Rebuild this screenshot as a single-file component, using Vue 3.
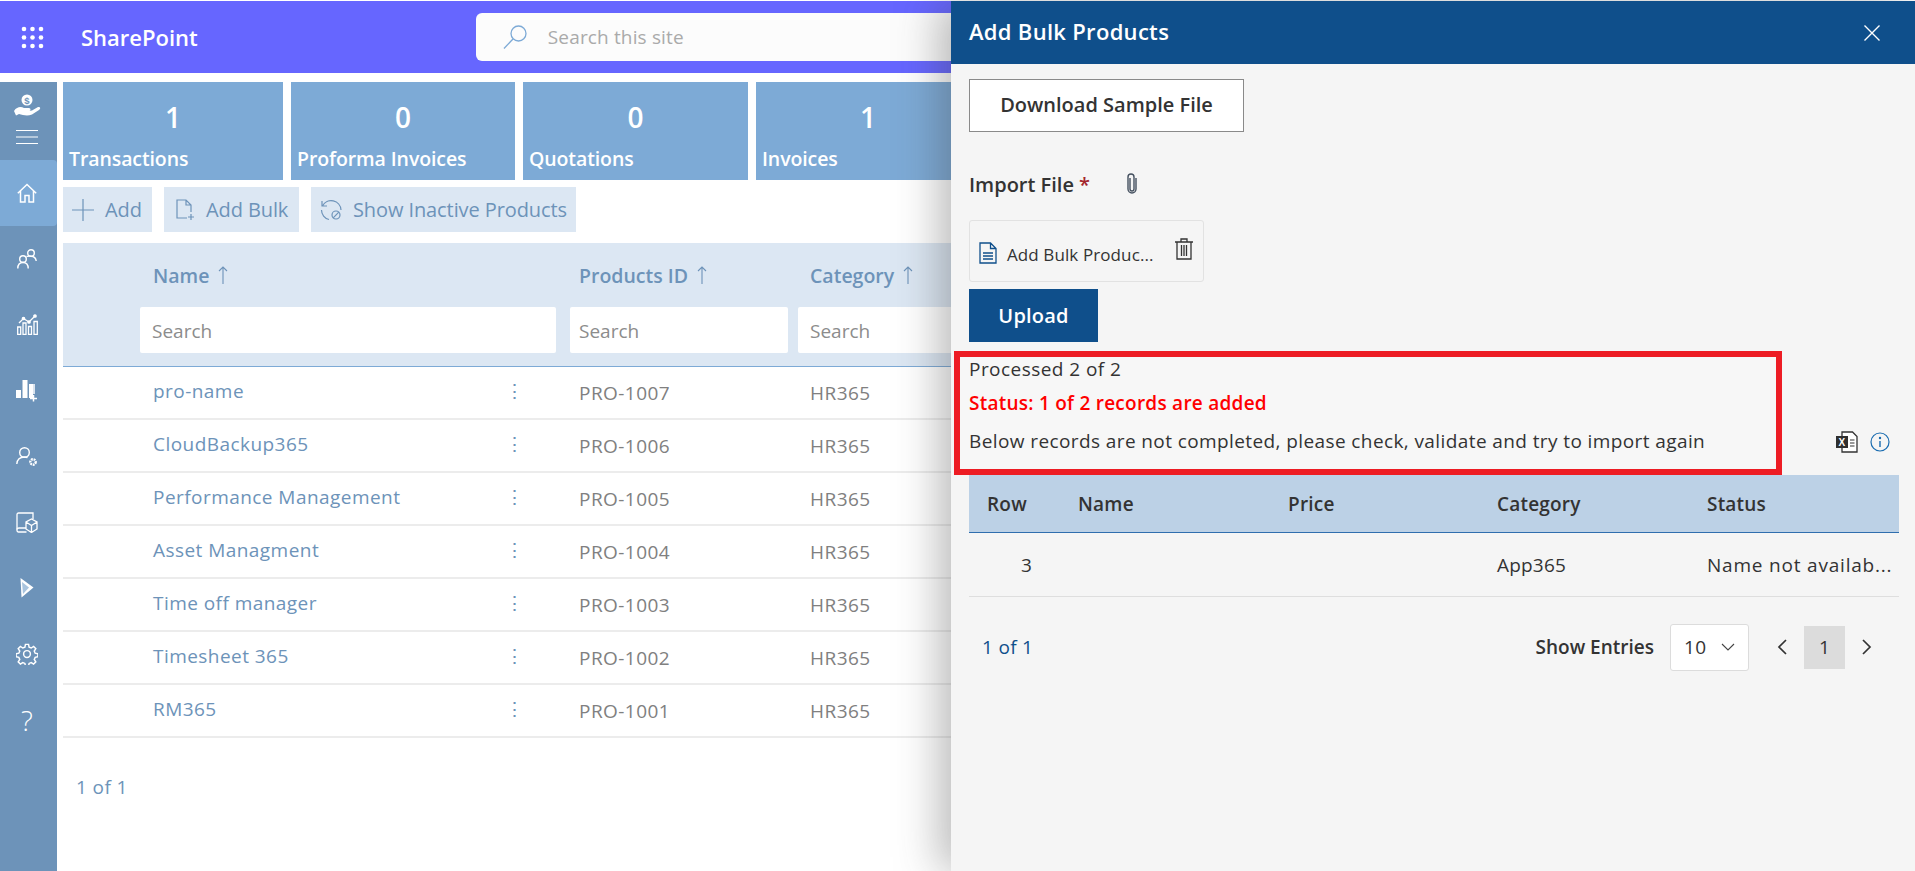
<script setup>
const tiles = [
  { n: '1', label: 'Transactions' },
  { n: '0', label: 'Proforma Invoices' },
  { n: '0', label: 'Quotations' },
  { n: '1', label: 'Invoices' },
]
const rows = [
  ['pro-name', 'PRO-1007'],
  ['CloudBackup365', 'PRO-1006'],
  ['Performance Management', 'PRO-1005'],
  ['Asset Managment', 'PRO-1004'],
  ['Time off manager', 'PRO-1003'],
  ['Timesheet 365', 'PRO-1002'],
  ['RM365', 'PRO-1001'],
]
const cols = [
  { label: 'Name', cls: 'cell-name' },
  { label: 'Products ID', cls: 'cell-id' },
  { label: 'Category', cls: 'cell-cat' },
]
</script>

<template>
  <div class="page">
    <header class="topbar">
      <svg class="waffle" width="23" height="23" viewBox="0 0 23 23" fill="#fff">
        <circle cx="3" cy="3" r="2.300" /><circle cx="11.500" cy="3" r="2.300" /><circle cx="20" cy="3" r="2.300" />
        <circle cx="3" cy="11.500" r="2.300" /><circle cx="11.500" cy="11.500" r="2.300" /><circle cx="20" cy="11.500" r="2.300" />
        <circle cx="3" cy="20" r="2.300" /><circle cx="11.500" cy="20" r="2.300" /><circle cx="20" cy="20" r="2.300" />
      </svg>
      <span class="brand">SharePoint</span>
      <div class="sitesearch">
        <svg width="24" height="24" viewBox="0 0 24 24" fill="none" stroke="#7daad6" stroke-width="1.300">
          <circle cx="15.500" cy="8.500" r="7.500" /><path d="M10 14 L1 23.500" />
        </svg>
        <span>Search this site</span>
      </div>
    </header>

    <div class="body">
      <aside class="side">
        <div class="side-top">
          <svg width="28" height="24" viewBox="0 0 28 24">
            <circle cx="14" cy="6" r="5.500" fill="#fff" />
            <text x="14" y="9.500" font-size="9.500" font-weight="700" text-anchor="middle" fill="#6d93b9" font-family="Liberation Sans">$</text>
            <path d="M1 17 C4 12.500 8 12.500 11 14 L16 14 C18 14.500 18 16.500 16 17 L12 17.500 L19 16.500 L25 13 C27.500 12.500 28 14.500 26 16 L19 20.500 C14 22.500 10 21 6 20 L3 21.500 Z" fill="#fff" />
          </svg>
          <svg width="22" height="14" viewBox="0 0 22 14" stroke="#fff" stroke-width="1"><path d="M0 .5h22M0 7h22M0 13.500h22" /></svg>
        </div>
        <div class="side-item active">
          <svg width="20" height="20" viewBox="0 0 20 20" fill="none" stroke="#fff" stroke-width="1.500"><path d="M.8 10.200 10 1.500l9.200 8.700M3.500 8v11h4.500v-6.500h4V19h4.500V8" /></svg>
        </div>
        <div class="side-item">
          <svg width="20" height="20" viewBox="0 0 20 20" fill="none" stroke="#fff" stroke-width="1.400"><circle cx="14" cy="4" r="3.300" /><circle cx="6" cy="10" r="3.300" /><path d="M.8 19.500c0-3.500 2-6 5.200-6s5.200 2.500 5.200 6M9.500 7.500c1.500-.2 3-.5 4.500-.3 3 .2 5 2.300 5.200 4.800" /></svg>
        </div>
        <div class="side-item">
          <svg width="21" height="21" viewBox="0 0 21 21" fill="none" stroke="#fff" stroke-width="1.300"><path d="M.7 13h3v7.300h-3zM6 9h3v11.300H6zM11.500 12.500h3v7.800h-3zM17 7.500h3.300v12.800H17z" /><path d="M2 9l4.500-4.500L12 8l6-6" /><circle cx="6.500" cy="4.500" r="1.200" fill="#fff" /><circle cx="12" cy="8" r="1.200" fill="#fff" /><circle cx="18" cy="2" r="1.200" fill="#fff" /></svg>
        </div>
        <div class="side-item">
          <svg width="22" height="22" viewBox="0 0 22 22" fill="#fff"><path d="M0 10h5v8H0zM6.500 0h5v18h-5zM13 4h4v14h-4z" /><path d="M18 4v10M14 18.500h7M17.500 15v6.500" stroke="#fff" stroke-width="1.500" /></svg>
        </div>
        <div class="side-item">
          <svg width="22" height="20" viewBox="0 0 22 20" fill="none" stroke="#fff" stroke-width="1.400"><circle cx="8.500" cy="5.500" r="4.800" /><path d="M.8 17c.4-4.500 3.500-7 7.700-7 1 0 2 .2 3 .6" /><circle cx="17" cy="15" r="2.700" stroke-width="2.400" stroke-dasharray="1.800 .8" /></svg>
        </div>
        <div class="side-item">
          <svg width="22" height="21" viewBox="0 0 22 21" fill="none" stroke="#fff" stroke-width="1.300"><path d="M10.500 20H2.500A1.500 1.500 0 0 1 1 18.500V2.500A1.500 1.500 0 0 1 2.500 1H17v6" /><path d="M1 17.500c0-1 .8-1.500 2-1.500h7" /><path d="M15.500 7 21 10v7l-5.500 3.500L10 17v-7zM10 10l5.500 3.500L21 10M15.500 13.500v7" /></svg>
        </div>
        <div class="side-item">
          <svg width="14" height="20" viewBox="0 0 14 20"><path d="M.5 0 13.500 9.500 1.500 19.500z" fill="#fff" /><path d="M2 4 9 9.500 3 16z" fill="#a9c4de" /></svg>
        </div>
        <div class="side-item">
          <svg width="22" height="22" viewBox="0 0 24 24" fill="none" stroke="#fff" stroke-width="1.600"><circle cx="12" cy="12" r="3.700" /><path d="M10.300 1.500h3.400l.6 3 2.300 1 2.600-1.700 2.400 2.400-1.700 2.600 1 2.300 3 .6v3.400l-3 .6-1 2.300 1.700 2.600-2.400 2.400-2.600-1.700-2.300 1-.6 3h-3.400l-.6-3-2.300-1-2.600 1.700-2.400-2.400 1.700-2.600-1-2.300-3-.6v-3.400l3-.6 1-2.300L2.400 6.200l2.400-2.400 2.600 1.700 2.300-1z" /></svg>
        </div>
        <div class="side-item help">?</div>
      </aside>

      <main class="main">
        <section class="tiles">
          <div v-for="t in tiles" :key="t.label" class="tile">
            <div class="tile-n">{{ t.n }}</div>
            <div class="tile-l">{{ t.label }}</div>
          </div>
        </section>

        <section class="toolbar">
          <button class="tool tool-add">
            <svg width="22" height="22" viewBox="0 0 22 22" stroke="#6d93b9" stroke-width="1.200"><path d="M11 0v22M0 11h22" /></svg>
            <span>Add</span>
          </button>
          <button class="tool tool-bulk">
            <svg width="18" height="22" viewBox="0 0 18 22" fill="none" stroke="#6d93b9" stroke-width="1.200"><path d="M11 19H1V1h9l5 5v7M10 1v5h5M15 15v6M12 18h6" /></svg>
            <span>Add Bulk</span>
          </button>
          <button class="tool tool-inactive">
            <svg width="22" height="22" viewBox="0 0 22 22" fill="none" stroke="#6d93b9" stroke-width="1.200"><path d="M2.500 7a9.800 9.800 0 0 1 18.500 4M9 20.500A9.800 9.800 0 0 1 1.500 11M2 2v5h5" /><circle cx="16" cy="16" r="4" /><path d="M13.200 18.800l5.600-5.600" /></svg>
            <span>Show Inactive Products</span>
          </button>
        </section>

        <section class="grid">
          <div class="grid-head">
            <div v-for="c in cols" :key="c.label" :class="c.cls">
              <div class="hlabel">
                <span>{{ c.label }}</span>
                <svg width="10" height="18" viewBox="0 0 10 18" fill="none" stroke="#6d93b9" stroke-width="1.100"><path d="M5 18V1M1 5l4-4 4 4" /></svg>
              </div>
              <div class="hsearch">Search</div>
            </div>
          </div>
          <div v-for="r in rows" :key="r[1]" class="grid-row">
            <div class="row-name"><span class="link">{{ r[0] }}</span><span class="dots">⋮</span></div>
            <div class="row-id">{{ r[1] }}</div>
            <div class="row-cat">HR365</div>
          </div>
          <div class="count">1 of 1</div>
        </section>
      </main>
    </div>

    <aside class="panel">
      <div class="panel-head">
        <span class="panel-title">Add Bulk Products</span>
        <svg width="16" height="16" viewBox="0 0 16 16" stroke="#fff" stroke-width="1.400"><path d="M.5.5l15 15M15.500.5l-15 15" /></svg>
      </div>
      <div class="panel-body">
        <button class="download">Download Sample File</button>
        <div class="import">
          <span class="import-label">Import File <span class="req">*</span></span>
          <svg class="clip" width="12" height="22" viewBox="0 0 12 22" fill="none" stroke="#44505f" stroke-width="1.400"><path d="M4 5v11a2 2 0 0 0 4 0V4a3 3 0 0 0-6 0v12a4 4 0 0 0 8 0V5" /></svg>
        </div>
        <div class="filebox">
          <svg class="fdoc" width="18" height="22" viewBox="0 0 18 22" fill="none" stroke="#0f4f8b" stroke-width="1.300"><path d="M1 1h10.500l5.500 5.500V21H1zM11.500 1v5.500H17M4 11h10M4 14h10M4 17h10" /></svg>
          <span class="fname">Add Bulk Produc...</span>
          <svg class="trash" width="18" height="22" viewBox="0 0 18 22" fill="none" stroke="#333" stroke-width="1.300"><path d="M0 4h18M6 4V1h6v3M2 4v17h14V4M6.500 7v11M9 7v11M11.500 7v11" /></svg>
        </div>
        <button class="upload">Upload</button>

        <div class="status-block">
          <div class="st-1">Processed 2 of 2</div>
          <div class="st-2">Status: 1 of 2 records are added</div>
          <div class="st-3">
            <span>Below records are not completed, please check, validate and try to import again</span>
            <span class="st-icons">
              <svg width="22" height="22" viewBox="0 0 22 22">
                <path d="M6 1h10.500L21 5.500V21H6z" fill="#fff" stroke="#333" stroke-width="1.300" />
                <path d="M14 9h4.500M14 12h4.500M14 15h4.500" stroke="#333" stroke-width="1.200" />
                <rect x="0" y="5" width="12" height="12" fill="#2f2f2f" />
                <text x="6" y="14.800" text-anchor="middle" font-size="10" font-weight="700" fill="#fff" font-family="Liberation Sans">X</text>
              </svg>
              <svg width="20" height="20" viewBox="0 0 20 20" fill="none" stroke="#1a6cb0" stroke-width="1.200"><circle cx="10" cy="10" r="9" /><path d="M10 9v6" stroke-width="1.400" /><circle cx="10" cy="6" r=".6" /></svg>
            </span>
          </div>
        </div>

        <div class="err-table">
          <div class="err-head">
            <span class="c-row">Row</span><span class="c-name">Name</span><span class="c-price">Price</span><span class="c-cat">Category</span><span class="c-stat">Status</span>
          </div>
          <div class="err-row">
            <span class="c-row num">3</span><span class="c-name"></span><span class="c-price"></span><span class="c-cat">App365</span><span class="c-stat">Name not availab...</span>
          </div>
        </div>

        <div class="pager">
          <span class="pcount">1 of 1</span>
          <span class="plabel">Show Entries</span>
          <div class="pselect">
            <span>10</span>
            <svg width="14" height="8" viewBox="0 0 14 8" fill="none" stroke="#444" stroke-width="1.100"><path d="M1 1l6 6 6-6" /></svg>
          </div>
          <svg class="pprev" width="10" height="16" viewBox="0 0 10 16" fill="none" stroke="#333" stroke-width="1.700"><path d="M9 1 2 8l7 7" /></svg>
          <span class="pnum">1</span>
          <svg class="pnext" width="10" height="16" viewBox="0 0 10 16" fill="none" stroke="#333" stroke-width="1.700"><path d="M1 1l7 7-7 7" /></svg>
        </div>
      </div>
    </aside>
  </div>
</template>

<style>
html, body { margin: 0; background: #fff; overflow: hidden; }
</style>

<style scoped>
.page {
  position: relative;
  width: 1915px;
  height: 871px;
  overflow: hidden;
  background: #fff;
  font-family: "Open Sans", "Noto Sans", sans-serif;
  color: #333;
}
button { font-family: inherit; cursor: pointer; }

.topbar {
  margin-top: 1px;
  height: 72px;
  background: #6666ff;
  display: flex;
  align-items: center;
  color: #fff;
}
.waffle { margin-left: 21px; }
.brand { margin-left: 37px; font-size: 22px; font-weight: 600; letter-spacing: 0; }
.sitesearch {
  margin-left: 278px;
  width: 560px;
  height: 48px;
  background: #fcfcfc;
  border-radius: 6px;
  display: flex;
  align-items: center;
  gap: 21px;
  padding-left: 27px;
  color: #aaa;
  font-size: 19px;
  letter-spacing: 0.15px;
}

.body { display: flex; margin-top: 9px; height: 789px; }
.side { width: 57px; background: #6d93b9; display: flex; flex-direction: column; flex-shrink: 0; }
.side-top {
  height: 78px;
  display: flex;
  flex-direction: column;
  align-items: center;
  padding: 12px 3px 0 0;
  gap: 12px;
  box-sizing: border-box;
}
.side-item { height: 65.900px; display: flex; align-items: center; justify-content: center; padding-right: 3px; flex-shrink: 0; }
.side-item.active { background: #7daad6; border-radius: 0 4px 4px 0; }
.help { color: #fff; font-size: 28px; font-weight: 300; }

.main { flex: 1; padding-left: 6px; min-width: 0; }
.tiles { display: flex; gap: 8px; }
.tile {
  width: 224px;
  height: 98px;
  background: #7daad6;
  color: #fff;
  flex-shrink: 0;
  padding: 0 6px;
  box-sizing: border-box;
}
.tile:first-child { width: 220px; }
.tile:nth-child(3) { width: 225px; }
.tile-n { text-align: center; font-size: 28px; font-weight: 600; line-height: 38px; padding-top: 16px; }
.tile-l { font-size: 19.500px; font-weight: 600; line-height: 28px; margin-top: 9px; white-space: nowrap; letter-spacing: -0.1px; }

.toolbar { display: flex; gap: 12px; margin-top: 7px; }
.tool {
  height: 45px;
  background: #dce7f3;
  border: 0;
  color: #6d93b9;
  font-size: 20px;
  letter-spacing: -0.1px;
  display: flex;
  align-items: center;
  padding: 0;
}
.tool-add { width: 89px; gap: 11px; padding-left: 9px; }
.tool-bulk { width: 135px; gap: 12px; padding-left: 12px; }
.tool-inactive { width: 265px; gap: 11px; padding-left: 9px; }

.grid { margin-top: 11px; }
.grid-head {
  height: 123px;
  background: #dce7f3;
  border-bottom: 1px solid #7daad6;
  display: flex;
  padding-left: 77px;
  gap: 14px;
}
.cell-name { width: 416px; }
.cell-id { width: 218px; }
.cell-cat { width: 218px; margin-left: -4px; }
.hlabel {
  height: 64px;
  display: flex;
  align-items: center;
  gap: 9px;
  padding-left: 13px;
  color: #6d93b9;
  font-size: 19.500px;
  font-weight: 600;
}
.cell-id .hlabel { padding-left: 9px; }
.cell-cat .hlabel { padding-left: 12px; }
.hsearch {
  height: 46px;
  line-height: 48px;
  background: #fff;
  border-radius: 2px;
  padding-left: 12px;
  color: #8c8c8c;
  font-size: 19px;
}
.cell-id .hsearch { padding-left: 9px; }
.cell-cat .hsearch { padding-left: 12px; }
.grid-row {
  height: 53px;
  box-sizing: border-box;
  border-bottom: 2px solid #ececec;
  display: flex;
  align-items: center;
  font-size: 19px;
  letter-spacing: 0.45px;
  color: #808080;
}
.row-name { padding: 0 53px 0 90px; width: 371px; display: flex; justify-content: space-between; margin-top: -4px; }
.link { color: #6d93b9; }
.dots { color: #6d93b9; }
.row-id { width: 231px; padding-left: 2px; }
.row-cat { width: 120px; }
.count { margin-top: 36px; padding-left: 13px; font-size: 19px; color: #6d93b9; letter-spacing: 0.4px; }

.panel {
  position: absolute;
  top: 1px;
  right: 0;
  bottom: 0;
  width: 964px;
  background: #f5f5f5;
  box-shadow: -12px 0 40px rgba(60, 60, 60, 0.35);
  display: flex;
  flex-direction: column;
}
.panel-head {
  height: 63px;
  flex-shrink: 0;
  background: #0f4f8b;
  color: #fff;
  display: flex;
  align-items: center;
  justify-content: space-between;
  padding: 0 35px 0 18px;
}
.panel-title { font-size: 22px; font-weight: 600; letter-spacing: 0.3px; margin-bottom: 3px; }
.panel-body { position: relative; padding: 15px 16px 0 18px; flex: 1; }
.download {
  display: block;
  width: 275px;
  height: 53px;
  background: #fff;
  border: 1px solid #8a8a8a;
  color: #333;
  font-size: 20px;
  font-weight: 600;
  padding: 0 0 2px;
}
.import { display: flex; align-items: center; height: 30px; margin-top: 37px; }
.import-label { font-size: 20px; font-weight: 600; }
.req { color: #a4262c; }
.clip { margin-left: 36px; }
.filebox {
  margin-top: 21px;
  width: 235px;
  height: 62px;
  box-sizing: border-box;
  border: 1px solid #e2e2e2;
  border-radius: 3px;
  display: flex;
  align-items: center;
  padding: 0 10px 0 9px;
}
.fdoc { margin-top: 4px; }
.fname { font-size: 17px; margin: 6px 0 0 10px; letter-spacing: 0.1px; flex: 1; white-space: nowrap; }
.trash { margin-top: -4px; }
.upload {
  display: block;
  margin-top: 7px;
  width: 129px;
  height: 53px;
  background: #0f4f8b;
  color: #fff;
  border: 0;
  font-size: 20px;
  font-weight: 600;
  letter-spacing: 0.2px;
  padding: 0;
}
.status-block { position: relative; isolation: isolate; margin-top: 9px; height: 124px; box-sizing: border-box; padding-top: 2px; }
.status-block::before {
  content: "";
  position: absolute;
  z-index: -1;
  left: -15px;
  top: 0;
  width: 828px;
  height: 124px;
  box-sizing: border-box;
  border: 6px solid #ed1c24;
  background: #f7f7f7;
  pointer-events: none;
}
.st-1, .st-2, .st-3 { font-size: 19px; letter-spacing: 0.4px; }
.st-1 { line-height: 32px; letter-spacing: 0.45px; }
.st-2 { line-height: 37px; color: #ff0000; font-weight: 600; letter-spacing: 0.25px; }
.st-3 { line-height: 37px; margin-top: 1px; display: flex; justify-content: space-between; align-items: center; }
.st-icons { display: flex; gap: 12px; align-items: center; margin-right: 9px; }
.err-table { font-size: 19px; letter-spacing: 0.2px; }
.err-head {
  height: 58px;
  background: #bcd1e6;
  border-bottom: 1px solid #2f6eae;
  box-sizing: border-box;
  display: flex;
  align-items: center;
  font-weight: 600;
}
.err-row {
  height: 64px;
  border-bottom: 1px solid #dedede;
  box-sizing: border-box;
  display: flex;
  align-items: center;
  padding-top: 1px;
}
.c-row { width: 109px; padding-left: 18px; box-sizing: border-box; }
.num { padding-left: 52px; }
.c-name { width: 210px; }
.c-price { width: 209px; }
.c-cat { width: 210px; }
.c-stat { white-space: nowrap; width: 192px; overflow: hidden; }
.err-row .c-stat { letter-spacing: 0.8px; }
.pager { display: flex; align-items: center; margin-top: 26px; height: 48px; font-size: 19px; letter-spacing: 0.3px; }
.pcount { color: #0f4f8b; margin-left: 13px; }
.plabel { margin-left: auto; font-weight: 600; letter-spacing: 0; }
.pselect {
  width: 79px;
  height: 47px;
  margin-left: 16px;
  box-sizing: border-box;
  background: #fff;
  border: 1px solid #dcdcdc;
  border-radius: 3px;
  display: flex;
  align-items: center;
  justify-content: space-between;
  padding: 0 13px;
}
.pprev { margin-left: 28px; }
.pnum {
  width: 41px;
  height: 43px;
  margin-left: 17px;
  background: #dcdcdc;
  display: flex;
  align-items: center;
  justify-content: center;
}
.pnext { margin-left: 17px; margin-right: 27px; }
</style>
